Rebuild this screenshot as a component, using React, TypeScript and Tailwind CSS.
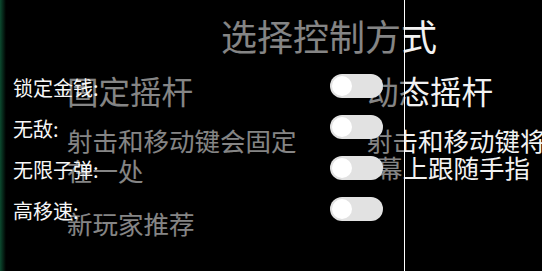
import React from "react";

const cheats = ["锁定金钱:", "无敌:", "无限子弹:", "高移速:"];

const Toggle = () => (
  <div className="w-[53px] h-[24px] rounded-full bg-[#e2e2e2] p-[2px] flex items-center">
    <div className="w-[20px] h-[20px] rounded-full bg-white" />
  </div>
);

const App = () => {
  return (
    <div
      className="relative w-[542px] h-[271px] bg-black overflow-hidden text-[#f2f2f2]"
      style={{ fontFamily: '"Noto Sans CJK SC", "Noto Sans", sans-serif' }}
    >
      {/* game screen behind */}
      <div className="ml-[67px] w-[524px] flex flex-col">
        <h1 className="mt-[17px] text-center text-[36px] leading-none whitespace-nowrap">
          选择控制方式
        </h1>
        <div className="mt-[22px] grid grid-cols-[300px_224px]">
          <div className="flex flex-col">
            <div className="text-[31.5px] leading-none whitespace-nowrap">
              固定摇杆
            </div>
            <div className="mt-[18px] text-[25.5px] leading-[30px] whitespace-nowrap">
              <div>射击和移动键会固定</div>
              <div>在一处</div>
            </div>
            <div className="mt-[23px] text-[25.5px] leading-[30px] whitespace-nowrap">
              新玩家推荐
            </div>
          </div>
          <div className="flex flex-col">
            <div className="text-[31.5px] leading-none whitespace-nowrap">
              动态摇杆
            </div>
            <div className="mt-[19px] text-[25.5px] leading-[27px] whitespace-nowrap">
              <div>射击和移动键将在屏</div>
              <div className="pl-[10px]">幕上跟随手指</div>
            </div>
          </div>
        </div>
      </div>

      {/* cheat menu overlay */}
      <div className="absolute inset-y-0 left-0 w-[405px] bg-black/45 border-r-[1.5px] border-white">
        <div className="absolute inset-y-0 left-0 w-[6px] bg-gradient-to-r from-[#0c4a2f] to-transparent" />
        <div className="pt-[65px] flex flex-col">
          {cheats.map((label) => (
            <div key={label} className="h-[41px] flex items-center">
              <span className="ml-[13px] mt-[4px] w-[317px] text-[20px] leading-none text-[#f7f7f7] whitespace-nowrap">
                {label}
              </span>
              <Toggle />
            </div>
          ))}
        </div>
      </div>
    </div>
  );
};

export default App;
